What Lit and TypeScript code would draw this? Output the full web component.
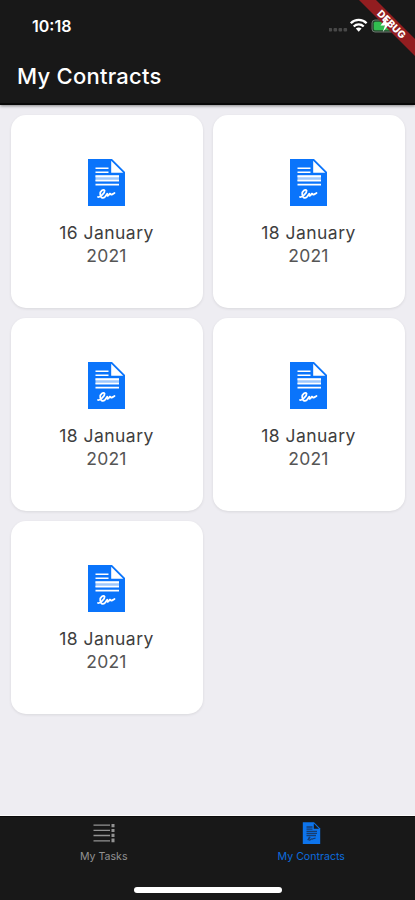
import { LitElement, html, css, svg } from "lit";
import { customElement, property } from "lit/decorators.js";

@customElement("contract-icon")
class ContractIcon extends LitElement {
  static styles = css`
    :host { display: block; width: 37px; height: 47px; }
    svg { display: block; width: 100%; height: 100%; }
  `;
  render() {
    return html`<svg viewBox="0 0 37 47">
      <path d="M0 0H24L37 13V47H0Z" fill="#0a74fb" />
      <path d="M23.2 1.8V13.8H35.2Z" fill="#fff" />
      <path d="M7.5 16H31V22.5H7.5Z" fill="#fff" opacity=".6" />
      <path d="M7.5 9.3H20.5M7.5 13.3H20.5M7.5 17.4H31M7.5 21.5H31M7.5 25.6H31" stroke="#fff" stroke-width="1.6" />
      <path d="M10 38C12 38.6 17 34 16.6 31.6C15.6 29.6 11.8 32 12.2 35.2C12.4 38.6 14.6 40.2 17.2 37.6L19.2 34.8C19 37 19.6 37.4 20.6 36.2C21.6 34.6 22.4 34 22.6 35.2C23 36.2 24.2 35.4 26.5 34" fill="none" stroke="#fff" stroke-width="1.8" stroke-linecap="round" stroke-linejoin="round" />
    </svg>`;
  }
}

@customElement("contract-card")
class ContractCard extends LitElement {
  @property() day = "";
  @property() year = "";
  static styles = css`
    :host {
      display: flex; flex-direction: column; align-items: center;
      box-sizing: border-box; height: 193px; padding: 44px 1px 0 0;
      border-radius: 15px; background: #fff;
      box-shadow: 0 1px 3px rgba(0, 0, 0, 0.09);
      text-align: center;
      font: 400 17.5px/23px Inter, "Liberation Sans", sans-serif;
    }
    .day { margin-top: 15px; letter-spacing: 0.47px; color: #3e3e3e; white-space: nowrap; }
    .year { color: #555; letter-spacing: 0.2px; }
  `;
  render() {
    return html`<contract-icon></contract-icon>
      <div class="day">${this.day}</div>
      <div class="year">${this.year}</div>`;
  }
}

@customElement("app-root")
class AppRoot extends LitElement {
  static styles = css`
    :host {
      position: relative; display: flex; flex-direction: column;
      height: 900px; overflow: hidden; background: #eeedf2;
      font-family: Inter, "Liberation Sans", sans-serif;
    }
    header {
      box-sizing: border-box; height: 105px; flex: none;
      background: #181818; color: #fff; border-bottom: 2px solid #080808;
      box-shadow: 0 1px 3px rgba(0, 0, 0, 0.45);
    }
    .status {
      display: flex; align-items: center; justify-content: space-between;
      height: 51px; padding: 0 14px 0 32px;
    }
    .time { font-size: 16px; font-weight: 600; letter-spacing: 0; }
    .signals { display: block; width: 72px; height: 20px; }
    h1 { margin: 0; padding-left: 17px; font-size: 22px; font-weight: 550; line-height: 50px; letter-spacing: 0.25px; }
    .banner { position: absolute; top: 0; right: 0; width: 60px; height: 60px; }
    .banner text { font: 800 10px Inter, "Liberation Sans", sans-serif; letter-spacing: 0.2px; }
    main {
      flex: 1; display: grid; grid-template-columns: 1fr 1fr;
      align-content: start; gap: 10px; padding: 10px 10px 0 11px;
    }
    nav {
      position: relative; display: grid; grid-template-columns: 1fr 1fr;
      box-sizing: border-box; height: 84px; flex: none;
      background: #181818; border-top: 1px solid #0b0b0b;
      box-shadow: 0 -1px 0 #fbfbfb;
    }
    .tab { display: flex; flex-direction: column; align-items: center; padding-top: 4px; color: #929292; font-size: 10.6px; line-height: 14px; }
    .tab svg { display: block; width: 24px; height: 24px; margin-bottom: 5px; }
    .active { color: #0d6cde; }
    .home { position: absolute; left: 134px; bottom: 7px; width: 148px; height: 6px; border-radius: 3px; background: #fff; }
  `;

  contracts = ["16 January", "18 January", "18 January", "18 January", "18 January"];

  render() {
    return html`
      <header>
        <div class="status">
          <span class="time">10:18</span>
          <svg class="signals" viewBox="0 0 72 20">
            ${[-0.5, 4.5, 9.5, 14.5].map((x) => svg`<rect x=${x} y="12" width="3.6" height="3.4" rx="1" fill="#484848" />`)}
            <g fill="none" stroke="#fff" stroke-width="2.3">
              <path d="M21.8 7.2C26 2.8 33.4 2.8 37.6 7.2" />
              <path d="M24.7 10.5C27.5 7.7 31.9 7.7 34.7 10.5" />
            </g>
            <path d="M26.8 12.6C28.5 11.1 30.9 11.1 32.6 12.6L29.7 15.7Z" fill="#fff" />
            <rect x="43" y="4" width="22" height="12" rx="3" fill="#244a2e" stroke="#6a756d" />
            <rect x="44.8" y="5.7" width="18.4" height="8.6" rx="1.5" fill="#31bd50" />
          </svg>
        </div>
        <h1>My Contracts</h1>
      </header>
      <main>
        ${this.contracts.map((day) => html`<contract-card day=${day} year="2021"></contract-card>`)}
      </main>
      <nav>
        <div class="tab">
          <svg viewBox="0 0 24 24">
            <path d="M1.5 4.2H18M1.5 9.3H18M1.5 14.5H18M1.5 19.8H18" stroke="#929292" stroke-width="1.3" />
            <path d="M21 3V6.3M21 7.9V11M21 12.8V16M21 17.6V21.2" stroke="#929292" stroke-width="3" />
          </svg>
          <span>My Tasks</span>
        </div>
        <div class="tab active">
          <svg viewBox="0 0 24 24">
            <path d="M3.8 1.2H15L21.2 7.5V23H3.8Z" fill="#0d74ec" />
            <path d="M14.8 2.5V7.8H20Z" fill="#181818" />
            <path d="M7.5 6H13.5M7.5 8.2H13.5M7.5 10.3H18M7.5 12.4H18M7.5 14.5H17" stroke="#173d70" stroke-width="1.3" />
            <path d="M8.5 18.8C11 17.5 11.5 15.5 10.2 16.4C8.7 18.5 10 20 12 18.2C13 17 13 18.8 14 17.7L16.5 17.2" fill="none" stroke="#173d70" stroke-width="1.2" />
          </svg>
          <span>My Contracts</span>
        </div>
        <div class="home"></div>
      </nav>
      <svg class="banner" viewBox="0 0 60 60">
        <path d="M4 0H21L60 39V56Z" fill="#921d20" />
        <path d="M33 16L25.5 25.5H30L27.8 32L35.5 22.5H31Z" fill="#fff" />
        <text x="0" y="3.6" text-anchor="middle" fill="#fff" transform="translate(36.7 24.3) rotate(45)">DEBUG</text>
      </svg>
    `;
  }
}
